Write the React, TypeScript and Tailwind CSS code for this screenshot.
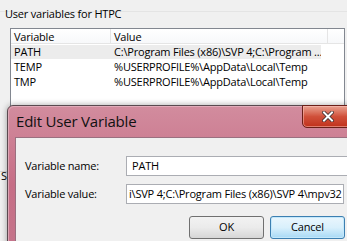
const ROWS = [
  { name: "PATH", value: "C:\\Program Files (x86)\\SVP 4;C:\\Program ...", selected: true },
  { name: "TEMP", value: "%USERPROFILE%\\AppData\\Local\\Temp", selected: false },
  { name: "TMP", value: "%USERPROFILE%\\AppData\\Local\\Temp", selected: false },
];

const App = () => {
  return (
    <div
      className="relative w-[347px] h-[241px] overflow-hidden bg-[#f0f0f0] text-[11px] tracking-[-0.2px] text-black"
      style={{ fontFamily: '"Open Sans", "Noto Sans", sans-serif' }}
    >
      <div className="h-[12px] border-b border-[#e4e4e4]" />
      <p className="pl-[5px] leading-[14px] -mt-[5px]">User variables for HTPC</p>

      {/* list view */}
      <div className="ml-[10px] mt-[7px] mr-[2px] h-[90px] bg-white border border-[#828790]">
        <div className="flex h-[15px] border-b border-[#e5e5e5] bg-gradient-to-b from-white to-[#f7f8fa] leading-[15px]">
          <div className="w-[100px] pl-[3px] border-r border-[#e5e5e5]">Variable</div>
          <div className="w-[217px] pl-[3px] border-r border-[#e5e5e5]">Value</div>
          <div className="flex-1" />
        </div>
        {ROWS.map((row) => (
          <div key={row.name} className="flex h-[14px] leading-[14px] mt-px">
            <div className={`flex w-[310px] ${row.selected ? "bg-[#ececec]" : ""}`}>
              <div className="w-[100px] pl-[3px]">{row.name}</div>
              <div className="flex-1 pl-[3px] whitespace-nowrap overflow-hidden">{row.value}</div>
            </div>
          </div>
        ))}
      </div>

      {/* system variables label, peeking out behind the dialog */}
      <div className="mt-[53px] w-[8px] border-t border-[#d5d5d5]" />
      <p className="absolute left-[1px] top-[169px] leading-[14px]">S</p>

      {/* Edit User Variable dialog */}
      <div className="absolute left-[7px] top-[105px] w-[360px] h-[160px] rounded-t-[6px] border border-[#5a4a50] bg-gradient-to-b from-[#d28c9e] via-[#c66e86] to-[#c4768c] shadow-[0_0_6px_rgba(0,0,0,0.35)]">
        <div className="absolute inset-0 rounded-t-[6px] border border-[#e6b9c4] opacity-70" />
        <div className="relative flex h-[30px] items-start">
          <p className="pl-[8px] pt-[5px] text-[15px] leading-[20px] text-[#111]">Edit User Variable</p>
          <div className="ml-auto mr-[12px] -mt-px flex h-[23px] w-[52px] items-center justify-center rounded-b-[5px] border border-[#6a1f18] bg-gradient-to-b from-[#e8a090] via-[#d0503a] to-[#c0301a] shadow-[inset_0_0_0_1px_rgba(255,200,190,0.5)]">
            <svg width="12" height="11" viewBox="0 0 12 11">
              <path d="M2 1.5 L10 9.5 M10 1.5 L2 9.5" stroke="#3a2a2a" strokeWidth="3.6" strokeLinecap="square" />
              <path d="M2 1.5 L10 9.5 M10 1.5 L2 9.5" stroke="#ffffff" strokeWidth="2" strokeLinecap="square" />
            </svg>
          </div>
        </div>

        <div className="relative ml-[7px] mt-px h-[130px] border border-[#9a7080] bg-[#f0f0f0]">
          <div className="flex items-center mt-[18px] h-[20px]">
            <span className="w-[110px] pl-[9px]">Variable name:</span>
            <div className="flex-1 h-[20px] border border-[#abadb3] bg-white pl-[5px] leading-[18px]">PATH</div>
          </div>
          <div className="flex items-center mt-[8px] h-[20px]">
            <span className="w-[110px] pl-[9px]">Variable value:</span>
            <div className="w-[218px] h-[20px] border border-[#abadb3] bg-white pl-[2px] leading-[18px] whitespace-nowrap overflow-hidden">
              i\SVP 4;C:\Program Files (x86)\SVP 4\mpv32
            </div>
          </div>
          <div className="flex gap-[6px] pl-[173px] mt-[12px]">
            <button
              type="button"
              className="w-[75px] h-[23px] rounded-[3px] border border-[#707070] bg-gradient-to-b from-[#f2f2f2] via-[#ebebeb] to-[#d6d6d6] tracking-[-0.2px]"
            >
              OK
            </button>
            <button
              type="button"
              className="w-[75px] h-[23px] rounded-[3px] border border-[#3c7fb1] bg-gradient-to-b from-[#eaf6fd] via-[#d9f0fc] to-[#a7d9f5] shadow-[inset_0_0_0_1px_#c4e8fb] tracking-[-0.2px]"
            >
              Cancel
            </button>
          </div>
        </div>
      </div>
    </div>
  );
};

export default App;
